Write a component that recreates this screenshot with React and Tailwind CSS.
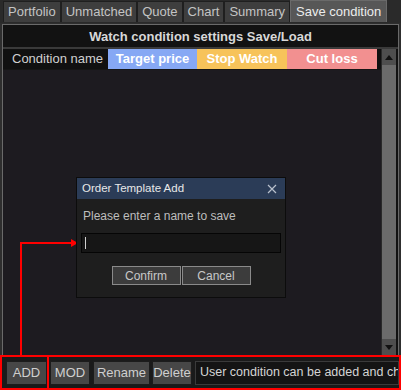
import React from "react";

const tabs = ["Portfolio", "Unmatched", "Quote", "Chart", "Summary", "Save condition"];

function App() {
  return (
    <div
      className="relative w-[401px] h-[390px] overflow-hidden bg-[#2e2e2e] flex flex-col text-[12px] text-[#cfcfcf]"
      style={{ fontFamily: '"Liberation Sans", Arial, sans-serif' }}
    >
      {/* Tabs */}
      <div className="h-[23px] flex items-start pl-[3px] pt-[1px] bg-[#2a2a2a]">
        {tabs.map((t, i) => (
          <div
            key={t}
            className={
              i === 5
                ? "h-[22px] -mt-[1px] px-[5px] flex items-center bg-[#575757] border border-[#6a6a6a] border-b-0 text-[#ececec] text-[13px]"
                : "h-[21px] px-[4px] flex items-center bg-[#3e3e3e] border border-[#1f1f1f] border-b-0 text-[#c4c4c4] text-[13px]"
            }
          >
            {t}
          </div>
        ))}
      </div>

      {/* Main panel */}
      <div className="flex-1 flex flex-col mt-[1px] mx-[2px] border border-[#6a6a6a] border-b-0 bg-[#121212]">
        <div className="h-[24px] pt-[1px] flex items-center justify-center font-bold text-[13px] text-[#d8d8d8] border-b-2 border-[#3a3a3a]">
          Watch condition settings Save/Load
        </div>
        <div className="flex-1 flex">
          <div className="flex-1 flex flex-col">
            <div className="h-[20px] flex items-stretch bg-[#101010] text-[13px]">
              <div className="w-[105px] pl-[9px] flex items-center whitespace-nowrap text-[#d0d0d0]">Condition name</div>
              <div className="w-[89px] flex items-center justify-center bg-[#86a8f4] text-white font-bold">Target price</div>
              <div className="w-[90px] flex items-center justify-center bg-[#f7c35a] text-white font-bold">Stop Watch</div>
              <div className="w-[90px] flex items-center justify-center bg-[#f29090] text-white font-bold">Cut loss</div>
            </div>
            <div className="flex-1 bg-[#1d1b20] border-t border-[#151515]"></div>
          </div>
          {/* Scrollbar */}
          <div className="w-[15px] mr-[2px] flex flex-col bg-[#6b6b6b] border-l border-[#2a2a2a]">
            <div className="h-[16px] bg-[#4e4e4e] flex items-center justify-center">
              <svg width="8" height="5" viewBox="0 0 8 5"><polygon points="0,5 8,5 4,0" fill="#111" /></svg>
            </div>
            <div className="flex-1"></div>
            <div className="h-[16px] bg-[#4e4e4e] flex items-center justify-center">
              <svg width="8" height="5" viewBox="0 0 8 5"><polygon points="0,0 8,0 4,5" fill="#111" /></svg>
            </div>
          </div>
        </div>
      </div>

      {/* Bottom bar */}
      <div className="h-[35px] flex items-center pl-[4px] bg-[#1a1a1a] border-2 border-[#ff0000] text-[13px]">
        <button className="w-[41px] h-[24px] bg-[#474747] border border-[#1c1c1c] text-[#cfcfcf]">ADD</button>
        <button className="w-[40px] h-[24px] ml-[3px] bg-[#474747] border border-[#1c1c1c] text-[#cfcfcf]">MOD</button>
        <button className="w-[57px] h-[24px] ml-[3px] bg-[#474747] border border-[#1c1c1c] text-[#cfcfcf]">Rename</button>
        <button className="w-[40px] h-[24px] ml-[2px] bg-[#474747] border border-[#1c1c1c] text-[#cfcfcf]">Delete</button>
        <div className="flex-1 h-[24px] ml-[3px] flex items-center pl-[4px] bg-[#141414] border border-[#3a3a3a] overflow-hidden whitespace-nowrap text-[12.5px] text-[#d4d4d4]">
          User condition can be added and changed.
        </div>
      </div>

      {/* ADD highlight box */}
      <div className="absolute left-0 top-[355px] w-[49px] h-[35px] border-2 border-[#ff0000]"></div>

      {/* Red arrow annotation */}
      <svg className="absolute left-0 top-0" width="401" height="390">
        <polyline points="21,356 21,243 72,243" fill="none" stroke="#ff0000" strokeWidth="2" />
        <polygon points="71,239 78,243 71,247" fill="#ff0000" />
      </svg>

      {/* Dialog */}
      <div className="absolute left-[76px] top-[177px] w-[210px] h-[121px] flex flex-col bg-[#1c1c1c] border border-[#0c0c0c]">
        <div className="h-[21px] flex items-center justify-between pl-[5px] pr-[8px] bg-[#2b3c57] text-[#e8e8e8] text-[11.5px]">
          <span>Order Template Add</span>
          <svg width="10" height="10" viewBox="0 0 10 10">
            <path d="M1 1 L9 9 M9 1 L1 9" stroke="#b8c0cc" strokeWidth="1.2" />
          </svg>
        </div>
        <div className="flex-1 flex flex-col px-[4px] pt-[8px] bg-[#1e1e1e]">
          <div className="pl-[2px] text-[#bdbdbd] text-[12px]">Please enter a name to save</div>
          <div className="mt-[8px] h-[20px] flex items-center pl-[3px] bg-[#161616] border border-[#050505]">
            <div className="w-[1px] h-[12px] bg-[#d0d0d0]"></div>
          </div>
          <div className="mt-[13px] flex justify-center gap-[1px]">
            <button className="w-[69px] h-[19px] bg-[#3c3c3c] border border-[#8a8a8a] text-[#c8c8c8] text-[12px]">Confirm</button>
            <button className="w-[69px] h-[19px] bg-[#3c3c3c] border border-[#8a8a8a] text-[#c8c8c8] text-[12px]">Cancel</button>
          </div>
        </div>
      </div>
    </div>
  );
}

export default App;
